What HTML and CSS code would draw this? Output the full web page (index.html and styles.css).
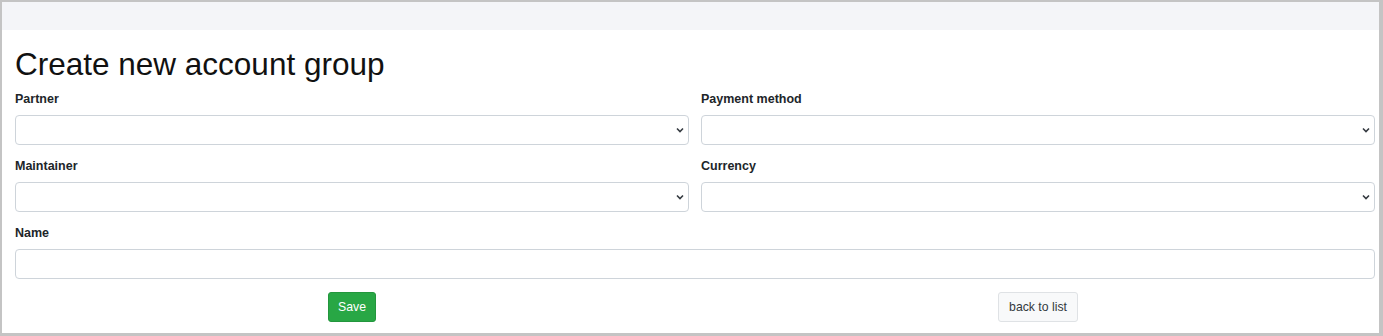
FILE: index.html
```html
<!DOCTYPE html>
<html lang="en">
<head>
  <meta charset="UTF-8" />
  <meta name="viewport" content="width=device-width, initial-scale=1.0"/>
  <title>Create new account group</title>
  <link rel="stylesheet" href="styles.css">
</head>
<body>
  <div class="frame">
    <div class="topbar"></div>

    <div class="content">
      <h1>Create new account group</h1>

      <form class="form">
        <div class="field">
          <label for="partner">Partner</label>
          <select id="partner"></select>
        </div>
        <div class="field">
          <label for="payment">Payment method</label>
          <select id="payment"></select>
        </div>
        <div class="field">
          <label for="maintainer">Maintainer</label>
          <select id="maintainer"></select>
        </div>
        <div class="field">
          <label for="currency">Currency</label>
          <select id="currency"></select>
        </div>
        <div class="field wide">
          <label for="name">Name</label>
          <input type="text" id="name" />
        </div>

        <div class="actions">
          <button type="button" class="btn btn-save">Save</button>
        </div>
        <div class="actions">
          <a href="#" class="btn btn-back">back to list</a>
        </div>
      </form>
    </div>
  </div>
</body>
</html>
```

FILE: styles.css
```css
* {
  box-sizing: border-box;
}

body {
  margin: 0;
  font-family: "Liberation Sans", Arial, sans-serif;
  color: #212529;
  background: #fff;
}

.frame {
  height: 336px;
  border-style: solid;
  border-color: #c4c4c4;
  border-width: 2px 4px 3px 2px;
  overflow: hidden;
}

.topbar {
  height: 28px;
  background: #f4f5f8;
}

.content {
  padding: 0 4px 0 13px;
}

h1 {
  margin: 15px 0 6px;
  font-size: 31.5px;
  font-weight: normal;
  line-height: 38px;
  color: #111;
}

.form {
  display: grid;
  grid-template-columns: 1fr 1fr;
  column-gap: 12px;
  row-gap: 11px;
}

.field.wide {
  grid-column: 1 / 3;
}

label {
  display: block;
  font-size: 12.5px;
  font-weight: bold;
  line-height: 20px;
  margin-bottom: 6px;
}

select, input[type="text"] {
  display: block;
  width: 100%;
  height: 30px;
  border: 1px solid #ced4da;
  border-radius: 4px;
  background-color: #fff;
  font-family: inherit;
  font-size: 13px;
  padding: 4px 8px;
}

select {
  appearance: none;
  -webkit-appearance: none;
  background-image: url("data:image/svg+xml;charset=utf8,%3Csvg xmlns='http://www.w3.org/2000/svg' viewBox='0 0 8 6'%3E%3Cpath d='M1 1.5l3 3 3-3' fill='none' stroke='%23343a40' stroke-width='1.6'/%3E%3C/svg%3E");
  background-repeat: no-repeat;
  background-position: right 4px center;
  background-size: 8px 6px;
}

.actions {
  display: flex;
  justify-content: center;
  margin-top: 2px;
}

.btn {
  display: inline-block;
  height: 30px;
  padding: 5px 9.5px;
  border: 1px solid transparent;
  border-radius: 3px;
  font-family: inherit;
  font-size: 12.25px;
  line-height: 18px;
  text-decoration: none;
  cursor: pointer;
}

.btn-save {
  background: #28a745;
  border-color: #23963d;
  color: #fff;
}

.btn-back {
  padding: 5px 10.5px;
  background: #f8f9fa;
  border-color: #dfe2e5;
  color: #343a40;
}
```
